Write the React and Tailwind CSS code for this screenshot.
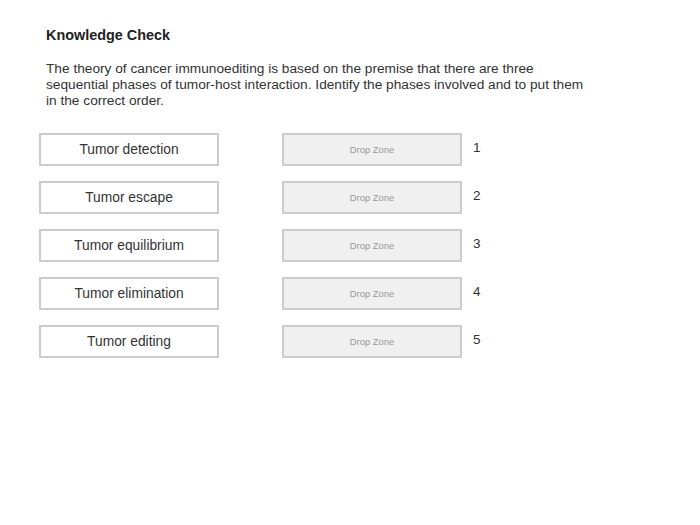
const ITEMS = [
  'Tumor detection',
  'Tumor escape',
  'Tumor equilibrium',
  'Tumor elimination',
  'Tumor editing',
];

export default function App() {
  return (
    <div className="w-[700px] h-[525px] bg-white text-[#222] font-['Liberation_Sans',Arial,sans-serif]">
      <div className="pl-[46px] pt-[27px]">
        <h1 className="text-[14.4px] font-bold leading-4">Knowledge Check</h1>
        <p className="mt-[18px] w-[545px] text-[13.7px] leading-4 text-[#333]">
          The theory of cancer immunoediting is based on the premise that there are three sequential phases of tumor-host interaction. Identify the phases involved and to put them in the correct order.
        </p>
      </div>

      <div className="mt-[24px] pl-[39px] flex flex-col gap-[15px]">
        {ITEMS.map((label, i) => (
          <div key={label} className="flex items-start">
            <div className="w-[180px] h-[33px] pt-[2px] border-2 border-[#cccccc] bg-white flex items-center justify-center text-[13.8px] text-[#333]">
              {label}
            </div>
            <div className="ml-[63px] w-[180px] h-[33px] pt-[1px] border-2 border-[#cccccc] bg-[#f0f0f0] flex items-center justify-center text-[9.4px] text-[#999]">
              Drop Zone
            </div>
            <div className="ml-[11px] mt-[7px] text-[13.5px] text-[#333] leading-4">{i + 1}</div>
          </div>
        ))}
      </div>
    </div>
  );
}
